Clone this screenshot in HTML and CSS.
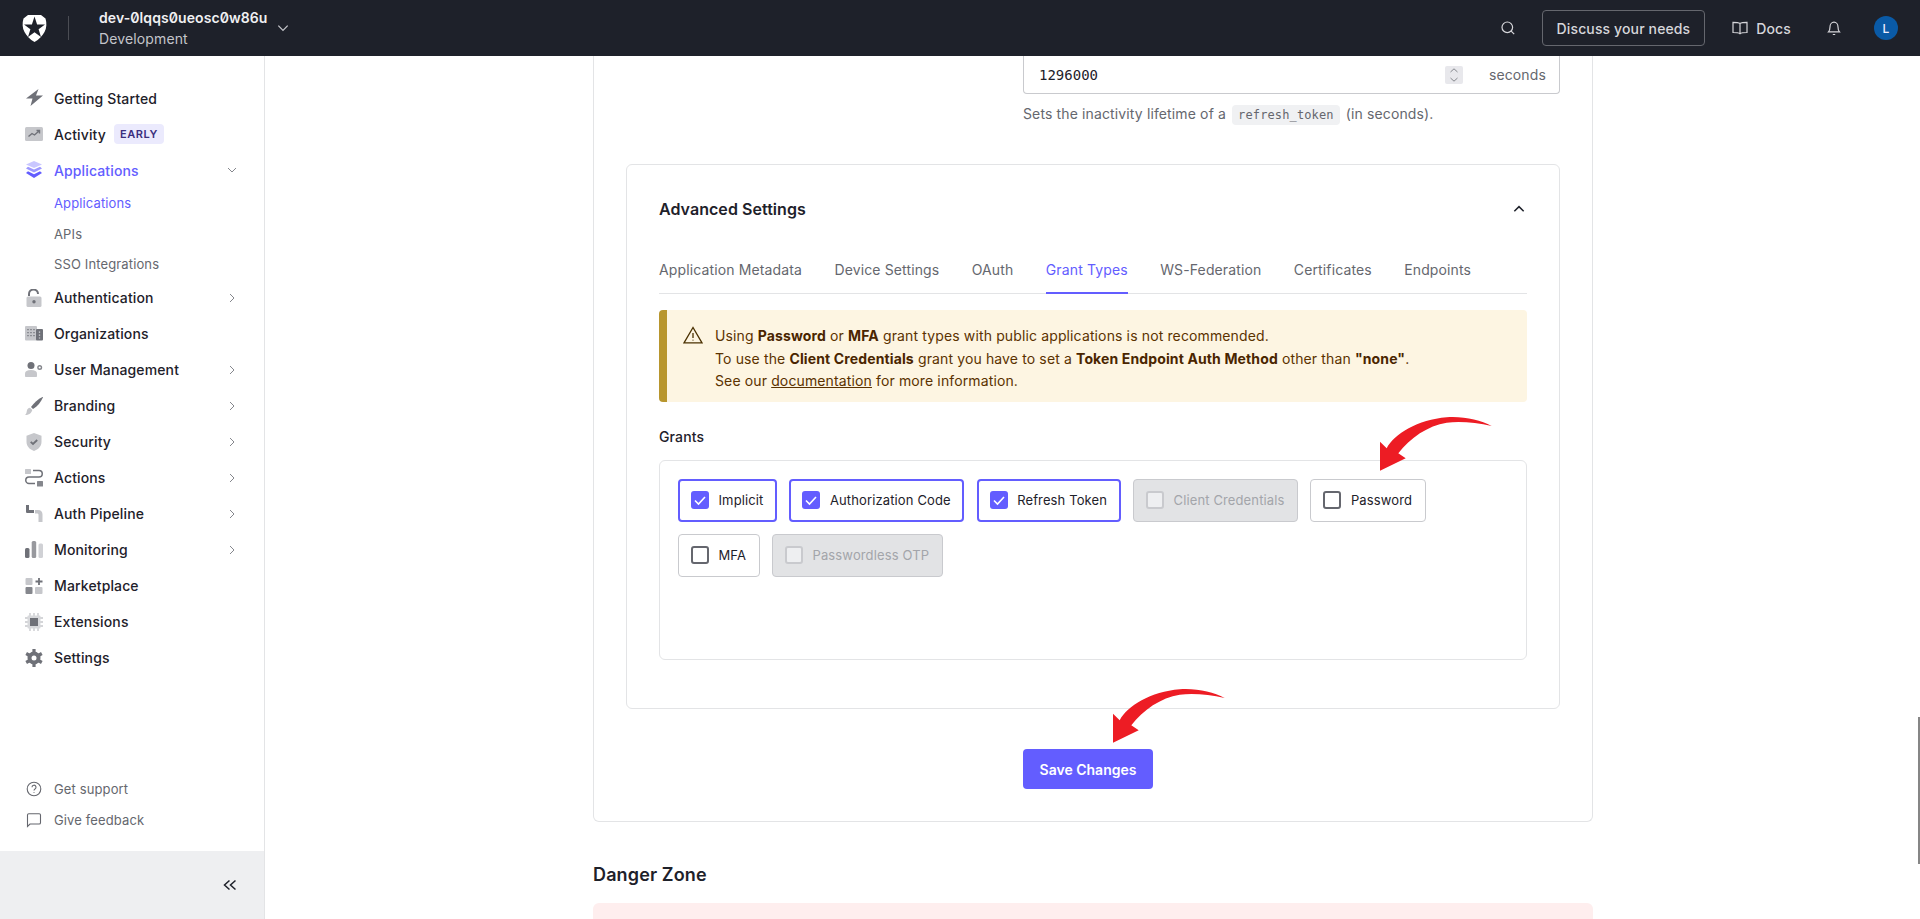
FILE: index.html
```html
<!DOCTYPE html>
<html>
<head>
    <title>Applications</title>
    <link rel="stylesheet" href="styles.css">
</head>
<body>
<header class="topbar">
    <svg class="logo" viewBox="0 0 25 27"><path fill="#fff" d="M6 0h13l4.500 3.500c1.400 4.800 1.200 9.500-1 13.500-2 3.800-5.500 7.500-10 10-4.500-2.500-8-6.200-10-10C.3 13 .1 8.300 1.500 3.500z"/><path fill="#1e212a" d="M12.500 1.500l2.600 8H23l-6.400 4.800L19 22l-6.500-4.700L6 22l2.400-7.700L2 9.500h7.900z"/></svg>
    <span class="topbar-divider"></span>
    <div class="tenant">
        <div class="tenant-name">dev-0lqqs0ueosc0w86u</div>
        <div class="tenant-env">Development</div>
    </div>
    <svg class="tenant-caret" viewBox="0 0 12 12"><path d="M2 4l4 4 4-4"/></svg>
    <div class="topbar-right">
        <svg class="top-icon" viewBox="0 0 16 16"><circle cx="7.3" cy="7.3" r="5.3"/><path d="M11.2 11.2l3 3"/></svg>
        <a class="discuss">Discuss your needs</a>
        <a class="docs">
            <svg class="top-icon" viewBox="0 0 16 16"><path d="M8 3.500C6.800 2.700 5 2.300 1 2.300v10.200c4 0 5.800.4 7 1.200 1.200-.8 3-1.200 7-1.200V2.300c-4 0-5.800.4-7 1.200zM8 3.500v10.200"/></svg>
            Docs
        </a>
        <svg class="top-icon bell" viewBox="0 0 16 16"><path d="M2.500 11.800c1.200-1.300 1.500-2.300 1.500-4.800 0-2.700 1.700-4.800 4-4.800s4 2.100 4 4.800c0 2.500.3 3.500 1.500 4.800zM6.800 14.500h2.400"/></svg>
        <span class="avatar">L</span>
    </div>
</header>

<div class="layout">
    <aside class="sidebar">
        <nav class="nav">
            <a class="nav-item">
                <svg class="nav-icon" viewBox="0 0 18 18"><path fill="#6f7178" d="M13.500 0L1 9.500h6.500L5.500 17 18 6.500h-7z"/></svg>
                Getting Started
            </a>
            <a class="nav-item">
                <svg class="nav-icon" viewBox="0 0 18 18"><rect y="2" width="18" height="14" rx="1.500" fill="#c6c7cb"/><path fill="none" stroke="#6f7178" stroke-width="1.400" d="M3.500 11.500l3.500-3 2.500 1.500 4.500-4M11.500 5.500h3v3"/></svg>
                Activity
                <span class="badge">EARLY</span>
            </a>
            <a class="nav-item active">
                <svg class="nav-icon" viewBox="0 0 18 18"><path fill="#c9c7ff" d="M9 0l8 3.500-8 3.500-8-3.500z"/><path fill="#9d98ff" d="M3 5.800l6 2.700 6-2.700 2 1.700-8 4-8-4z"/><path fill="#635dff" d="M3 10.300l6 3 6-3 2 1.700-8 5-8-5z"/></svg>
                Applications
                <svg class="nav-caret" viewBox="0 0 12 12"><path d="M2 4l4 4 4-4"/></svg>
            </a>
            <div class="subnav">
                <a class="sub-item active">Applications</a>
                <a class="sub-item">APIs</a>
                <a class="sub-item">SSO Integrations</a>
            </div>
            <a class="nav-item">
                <svg class="nav-icon" viewBox="0 0 18 18"><path fill="none" stroke="#6f7178" stroke-width="2" d="M4 7V5a4.500 4.500 0 0 1 9 0"/><rect x="1.500" y="7.500" width="15" height="10.500" rx="1.500" fill="#c6c7cb"/><circle cx="9" cy="12.700" r="1.700" fill="#6f7178"/></svg>
                Authentication
                <svg class="nav-caret" viewBox="0 0 12 12"><path d="M4 2l4 4-4 4"/></svg>
            </a>
            <a class="nav-item">
                <svg class="nav-icon" viewBox="0 0 18 18"><rect y="1" width="12" height="14.500" rx="1" fill="#c6c7cb"/><rect x="11" y="4" width="7" height="11.500" rx="1" fill="#6f7178"/><path stroke="#6f7178" stroke-width="1.300" stroke-dasharray="1.300 1.700" d="M3 4v9M6 4v9M9 4v9"/><path stroke="#d8d9dc" stroke-width="1.300" stroke-dasharray="1.300 1.700" d="M14.500 6.500v7"/></svg>
                Organizations
            </a>
            <a class="nav-item">
                <svg class="nav-icon" viewBox="0 0 18 18"><circle cx="6" cy="4.500" r="3.500" fill="#6f7178"/><path fill="#c6c7cb" d="M0 15v-2.500C0 10.500 2 9 6 9s6 1.500 6 3.500V15c0 .8-.5 1-1 1H1c-.5 0-1-.2-1-1z"/><circle cx="14.700" cy="6.500" r="1.800" fill="none" stroke="#85878d" stroke-width="1.400"/></svg>
                User Management
                <svg class="nav-caret" viewBox="0 0 12 12"><path d="M4 2l4 4-4 4"/></svg>
            </a>
            <a class="nav-item">
                <svg class="nav-icon" viewBox="0 0 18 18"><path fill="#6f7178" d="M17.500 0c.3 0 .5.200.4.500C16 5 12.500 9.500 8 12l-2-2C9 6 13 2 17.500 0z"/><path fill="#c6c7cb" d="M5 10.700l2.300 2.300c-.7 3-3.500 5-7.300 5 1.800-1.500 1.500-3 2-4.800.4-1.300 1.500-2.300 3-2.500z"/></svg>
                Branding
                <svg class="nav-caret" viewBox="0 0 12 12"><path d="M4 2l4 4-4 4"/></svg>
            </a>
            <a class="nav-item">
                <svg class="nav-icon" viewBox="0 0 18 18"><path fill="#c6c7cb" d="M9 0l7.500 2.700V9c0 4.300-3.300 7.500-7.500 9-4.200-1.500-7.500-4.700-7.500-9V2.700z"/><path fill="none" stroke="#6f7178" stroke-width="1.800" d="M5.700 8.800l2.300 2.200 4.200-4"/></svg>
                Security
                <svg class="nav-caret" viewBox="0 0 12 12"><path d="M4 2l4 4-4 4"/></svg>
            </a>
            <a class="nav-item">
                <svg class="nav-icon" viewBox="0 0 18 18"><rect width="6" height="5" rx=".5" fill="#c6c7cb"/><path fill="none" stroke="#6f7178" stroke-width="1.500" d="M8 1.500h6a2.900 2.900 0 0 1 0 6.500H4a2.900 2.900 0 0 0 0 6.500h6"/><rect width="6" height="5.500" x="12" y="12" rx=".5" fill="#85878d"/></svg>
                Actions
                <svg class="nav-caret" viewBox="0 0 12 12"><path d="M4 2l4 4-4 4"/></svg>
            </a>
            <a class="nav-item">
                <svg class="nav-icon" viewBox="0 0 18 18"><path fill="#6f7178" d="M1 0h3v5h5v3H2.500C1.500 8 1 7.500 1 6.500z"/><path fill="#c6c7cb" d="M10 5h3c3 0 4.500 2 4.500 4.500V17h-4v-7c0-1-.5-1.500-1.500-1.500h-2z"/></svg>
                Auth Pipeline
                <svg class="nav-caret" viewBox="0 0 12 12"><path d="M4 2l4 4-4 4"/></svg>
            </a>
            <a class="nav-item">
                <svg class="nav-icon" viewBox="0 0 18 18"><rect y="7" width="4.500" height="10" rx="1.500" fill="#6f7178"/><rect x="6.700" width="4.500" height="17" rx="1.500" fill="#98999e"/><rect x="13.500" y="2.500" width="4.500" height="14.500" rx="1.500" fill="#d0d1d5"/></svg>
                Monitoring
                <svg class="nav-caret" viewBox="0 0 12 12"><path d="M4 2l4 4-4 4"/></svg>
            </a>
            <a class="nav-item">
                <svg class="nav-icon" viewBox="0 0 18 18"><rect x=".5" y="1" width="7" height="7" rx="1" fill="#c6c7cb"/><path stroke="#6f7178" stroke-width="1.800" d="M14 1v7M10.500 4.500h7"/><rect x=".5" y="10" width="7" height="7" rx="1" fill="#85878d"/><rect x="10" y="10" width="7.500" height="7" rx="1" fill="#c6c7cb"/></svg>
                Marketplace
            </a>
            <a class="nav-item">
                <svg class="nav-icon" viewBox="0 0 18 18"><path stroke="#c6c7cb" stroke-width="1.300" d="M5 0v18M9 0v18M13 0v18M0 5h18M0 9h18M0 13h18"/><rect x="2.500" y="2.500" width="13" height="13" rx="1" fill="#d8d9dc"/><rect x="5" y="5" width="8" height="8" fill="#6f7178"/></svg>
                Extensions
            </a>
            <a class="nav-item">
                <svg class="nav-icon" viewBox="0 0 18 18"><path stroke="#6f7178" stroke-width="3.200" d="M9 0v18M1.200 4.500l15.600 9M1.200 13.500l15.600-9"/><circle cx="9" cy="9" r="6.500" fill="#6f7178"/><circle cx="9" cy="9" r="2.500" fill="#fff"/></svg>
                Settings
            </a>
        </nav>
        <div class="side-links">
            <a class="side-link">
                <svg class="link-icon" viewBox="0 0 16 16"><circle cx="8" cy="8" r="6.800"/><path d="M6 6.200a2 2 0 1 1 3 1.700c-.7.400-1 .8-1 1.600M8 11.300v.6"/></svg>
                Get support
            </a>
            <a class="side-link">
                <svg class="link-icon" viewBox="0 0 16 16"><path d="M1.500 14.500V3c0-.8.500-1.300 1.300-1.300h10.400c.8 0 1.300.5 1.300 1.300v7.700c0 .8-.5 1.300-1.300 1.300H4z"/></svg>
                Give feedback
            </a>
        </div>
        <div class="collapse">
            <svg viewBox="0 0 14 14"><path d="M6.500 2.500L1.500 7l5 4.500M12.500 2.500L7.500 7l5 4.500"/></svg>
        </div>
    </aside>

    <main class="main">
        <section class="settings-card">
            <div class="field">
                <div class="number-input">
                    <span class="number-value">1296000</span>
                    <span class="spinner">
                        <svg viewBox="0 0 18 18"><path d="M5.500 6L9 2.800 12.500 6M5.500 12L9 15.200 12.500 12"/></svg>
                    </span>
                    <span class="unit">seconds</span>
                </div>
                <p class="help">Sets the inactivity lifetime of a <code>refresh_token</code> (in seconds).</p>
            </div>

            <div class="advanced">
                <div class="advanced-head">
                    <h3>Advanced Settings</h3>
                    <svg viewBox="0 0 12 12"><path d="M2 8l4-4 4 4"/></svg>
                </div>
                <div class="tabs">
                    <a class="tab">Application Metadata</a>
                    <a class="tab">Device Settings</a>
                    <a class="tab">OAuth</a>
                    <a class="tab active">Grant Types</a>
                    <a class="tab">WS-Federation</a>
                    <a class="tab">Certificates</a>
                    <a class="tab">Endpoints</a>
                </div>
                <div class="alert">
                    <svg viewBox="0 0 20 18"><path d="M10 1.500L1 16.800h18zM10 7v5M10 13.800v.8"/></svg>
                    <div>
                        Using <b>Password</b> or <b>MFA</b> grant types with public applications is not recommended.<br>
                        To use the <b>Client Credentials</b> grant you have to set a <b>Token Endpoint Auth Method</b> other than <b>"none"</b>.<br>
                        See our <a class="alert-link">documentation</a> for more information.
                    </div>
                </div>
                <div class="grants-label">Grants</div>
                <div class="grants">
                    <label class="grant checked"><span class="box"><svg viewBox="0 0 18 18"><path d="M4 9.500l3.500 3.500L14 6"/></svg></span>Implicit</label>
                    <label class="grant checked"><span class="box"><svg viewBox="0 0 18 18"><path d="M4 9.500l3.500 3.500L14 6"/></svg></span>Authorization Code</label>
                    <label class="grant checked"><span class="box"><svg viewBox="0 0 18 18"><path d="M4 9.500l3.500 3.500L14 6"/></svg></span>Refresh Token</label>
                    <label class="grant disabled"><span class="box"></span>Client Credentials</label>
                    <label class="grant"><span class="box"></span>Password</label>
                    <label class="grant"><span class="box"></span>MFA</label>
                    <label class="grant disabled"><span class="box"></span>Passwordless OTP</label>
                </div>
            </div>

            <div class="save-row">
                <button class="save">Save Changes</button>
            </div>
        </section>

        <h2 class="danger-title">Danger Zone</h2>
        <div class="danger-box"></div>
    </main>
</div>

<svg class="arrow arrow-password" viewBox="0 0 114 56"><path d="M0 25.700L6.700 32.300C14 18 38 3.500 66.700 1.300 84 .2 100 4 111.700 10 96 6.500 80 5 66.700 6.700 48 9.500 30 22 18.300 37.300L25.700 42.300 0 54.700z"/></svg>
<svg class="arrow arrow-save" viewBox="0 0 114 56"><path d="M0 25.700L6.700 32.300C14 18 38 3.500 66.700 1.300 84 .2 100 4 111.700 10 96 6.500 80 5 66.700 6.700 48 9.500 30 22 18.300 37.300L25.700 42.300 0 54.700z"/></svg>
<div class="scroll-thumb"></div>
</body>
</html>
```

FILE: styles.css
```css
* {
    box-sizing: border-box;
}

html, body {
    height: 100%;
}

body {
    margin: 0;
    overflow: hidden;
    font-family: Inter, "Noto Sans", sans-serif;
    font-size: 14px;
    letter-spacing: .13px;
    color: #1e212a;
    background: #fff;
}

/* top bar */
.topbar {
    height: 56px;
    background: #1e212a;
    display: flex;
    align-items: center;
    padding-left: 22px;
    padding-right: 22px;
    color: #d6d6da;
}

.logo {
    width: 25px;
    height: 27px;
}

.topbar-divider {
    width: 1px;
    height: 24px;
    background: #4b4d54;
    margin-left: 21px;
    margin-right: 30px;
}

.tenant-name {
    font-weight: 600;
    line-height: 20px;
    color: #f0f0f2;
    letter-spacing: .08px;
    font-feature-settings: "zero";
}

.tenant-env {
    line-height: 20px;
    color: #c4c5ca;
    margin-top: 1px;
}

.tenant-caret {
    width: 14px;
    height: 14px;
    margin-left: 8px;
    fill: none;
    stroke: #c4c5ca;
    stroke-width: 1.1;
}

.topbar-right {
    margin-left: auto;
    display: flex;
    align-items: center;
}

.top-icon {
    width: 16px;
    height: 16px;
    fill: none;
    stroke: #d6d6da;
    stroke-width: 1.2;
    flex: none;
}

.discuss {
    margin-left: 26px;
    height: 36px;
    padding: 0 14px;
    display: flex;
    align-items: center;
    border: 1px solid #65676e;
    border-radius: 4px;
    font-weight: 500;
}

.docs {
    display: flex;
    align-items: center;
    gap: 8px;
    margin-left: 27px;
    font-weight: 500;
}

.bell {
    margin-left: 35px;
}

.avatar {
    width: 24px;
    height: 24px;
    margin-left: 32px;
    border-radius: 50%;
    background: #0a5aa6;
    color: #eef;
    font-size: 12px;
    font-weight: 500;
    display: flex;
    align-items: center;
    justify-content: center;
}

/* page layout */
.layout {
    display: flex;
    height: calc(100% - 56px);
}

.sidebar {
    width: 265px;
    flex: none;
    border-right: 1px solid #e3e4e6;
    display: flex;
    flex-direction: column;
}

.nav {
    padding-top: 24px;
    flex: 1;
}

.nav-item {
    height: 36px;
    display: flex;
    align-items: center;
    padding-left: 25px;
    padding-right: 26px;
    font-weight: 500;
    color: #1e212a;
}

.nav-icon {
    width: 18px;
    height: 18px;
    margin-right: 11px;
    flex: none;
}

.nav-item.active {
    color: #635dff;
}

.nav-caret {
    width: 12px;
    height: 12px;
    margin-left: auto;
    fill: none;
    stroke: #85878d;
    stroke-width: 1;
}

.badge {
    margin-left: 8px;
    height: 20px;
    padding: 0 6px;
    display: flex;
    align-items: center;
    border-radius: 4px;
    background: #ebeafd;
    color: #3b2f7d;
    font-size: 11px;
    font-weight: 600;
    letter-spacing: .6px;
}

.subnav {
    display: flex;
    flex-direction: column;
    padding-left: 54px;
}

.sub-item {
    height: 30.6px;
    display: flex;
    align-items: center;
    font-size: 13px;
    color: #65676e;
}

.sub-item.active {
    color: #635dff;
}

.side-links {
    padding-bottom: 16px;
}

.side-link {
    height: 31px;
    display: flex;
    align-items: center;
    padding-left: 26px;
    font-size: 13px;
    color: #65676e;
}

.link-icon {
    width: 16px;
    height: 16px;
    margin-right: 12px;
    fill: none;
    stroke: #65676e;
    stroke-width: 1.1;
}

.collapse {
    height: 68px;
    background: #eeeff1;
    display: flex;
    align-items: center;
    justify-content: flex-end;
    padding-right: 27px;
}

.collapse svg {
    width: 14px;
    height: 14px;
    fill: none;
    stroke: #1e212a;
    stroke-width: 1.5;
}

/* main column */
.main {
    flex: 1;
    overflow: hidden;
    padding-left: 328px;
    padding-right: 327px;
}

.settings-card {
    border: 1px solid #e3e4e6;
    border-top: 0;
    border-radius: 0 0 6px 6px;
    padding: 0 32px 32px;
}

.field {
    margin-left: 397px;
}

.number-input {
    height: 38px;
    display: flex;
    align-items: center;
    border: 1px solid #c9cace;
    border-top: 0;
    border-radius: 0 0 4px 4px;
    padding-left: 15px;
    padding-right: 13px;
}

.number-value {
    font-family: "DejaVu Sans Mono", monospace;
    font-size: 14px;
    letter-spacing: 0;
}

.spinner {
    margin-left: auto;
    width: 18px;
    height: 18px;
    background: #e8e8ec;
    border-radius: 2px;
}

.spinner svg {
    display: block;
    width: 18px;
    height: 18px;
    fill: none;
    stroke: #85878d;
    stroke-width: 1;
}

.unit {
    margin-left: 26px;
    color: #65676e;
}

.help {
    margin: 9px 0 0;
    height: 22px;
    line-height: 22px;
    color: #65676e;
}

code {
    font-family: "DejaVu Sans Mono", monospace;
    font-size: 12px;
    background: #f0f1f3;
    padding: 3px 6px;
    margin: 0 2px;
    border-radius: 4px;
}

.advanced {
    margin-top: 39px;
    border: 1px solid #e3e4e6;
    border-radius: 6px;
    padding: 32px 32px 48px;
}

.advanced-head {
    display: flex;
    align-items: center;
    justify-content: space-between;
    padding-right: 1px;
}

.advanced-head h3 {
    margin: 0;
    font-size: 16px;
    line-height: 24px;
    font-weight: 600;
    letter-spacing: .05px;
}

.advanced-head svg {
    width: 14px;
    height: 14px;
    fill: none;
    stroke: #1e212a;
    stroke-width: 1.3;
}

.tabs {
    margin-top: 39px;
    display: flex;
    gap: 32.4px;
    border-bottom: 1px solid #e3e4e6;
}

.tab {
    display: block;
    line-height: 20px;
    padding-bottom: 12px;
    color: #65676e;
    margin-bottom: -1px;
    border-bottom: 2px solid transparent;
}

.tab.active {
    color: #635dff;
    border-bottom-color: #635dff;
}

.alert {
    margin-top: 16px;
    height: 92px;
    background: #fdf5e2;
    border-left: 8px solid #b8962e;
    border-radius: 4px;
    display: flex;
    gap: 12px;
    padding: 15px 16px 0;
    color: #5b3200;
    line-height: 22.5px;
}

.alert svg {
    width: 20px;
    height: 18px;
    margin-top: 1px;
    flex: none;
    fill: none;
    stroke: #4a3000;
    stroke-width: 1.3;
}

.alert b {
    font-weight: 700;
    color: #4a2500;
}

.alert-link {
    text-decoration: underline;
}

.grants-label {
    margin-top: 25px;
    line-height: 20px;
    font-weight: 500;
}

.grants {
    margin-top: 13px;
    height: 200px;
    border: 1px solid #e3e4e6;
    border-radius: 6px;
    padding: 18px;
    display: flex;
    flex-wrap: wrap;
    align-content: flex-start;
    gap: 12px 12.4px;
}

.grant {
    height: 43px;
    display: flex;
    align-items: center;
    gap: 9.5px;
    padding: 0 12.5px 1px 12px;
    border: 1px solid #c9cace;
    border-radius: 4px;
    font-size: 13px;
    color: #1e212a;
}

.box {
    width: 18px;
    height: 18px;
    border: 2px solid #65676e;
    border-radius: 3px;
    flex: none;
}

.grant.checked {
    border: 2px solid #635dff;
    padding: 0 11.5px 1px 11px;
}

.grant.checked .box {
    background: #635dff;
    border: 0;
}

.box svg {
    display: block;
    width: 18px;
    height: 18px;
    fill: none;
    stroke: #fff;
    stroke-width: 1.6;
}

.grant.disabled {
    background: #e2e3e5;
    color: #a3a5aa;
}

.grant.disabled .box {
    background: #eeeff1;
    border-color: #c9cace;
}

.save-row {
    margin-left: 397px;
    margin-top: 40px;
}

.save {
    height: 40px;
    width: 130px;
    border: 0;
    border-radius: 4px;
    background: #635dff;
    color: #fff;
    font-family: inherit;
    font-size: 14px;
    font-weight: 600;
}

.danger-title {
    margin: 40px 0 0;
    font-size: 18px;
    line-height: 26px;
    font-weight: 600;
}

.danger-box {
    margin-top: 15px;
    height: 60px;
    background: #feeeee;
    border-radius: 6px;
}

/* annotations drawn over the screenshot */
.arrow {
    position: absolute;
    width: 114px;
    height: 56px;
    fill: #ed1c24;
}

.arrow-password {
    left: 1380px;
    top: 416px;
}

.arrow-save {
    left: 1113px;
    top: 688px;
}

.scroll-thumb {
    position: absolute;
    right: 0;
    top: 717px;
    width: 2px;
    height: 147px;
    background: #868686;
}
```
